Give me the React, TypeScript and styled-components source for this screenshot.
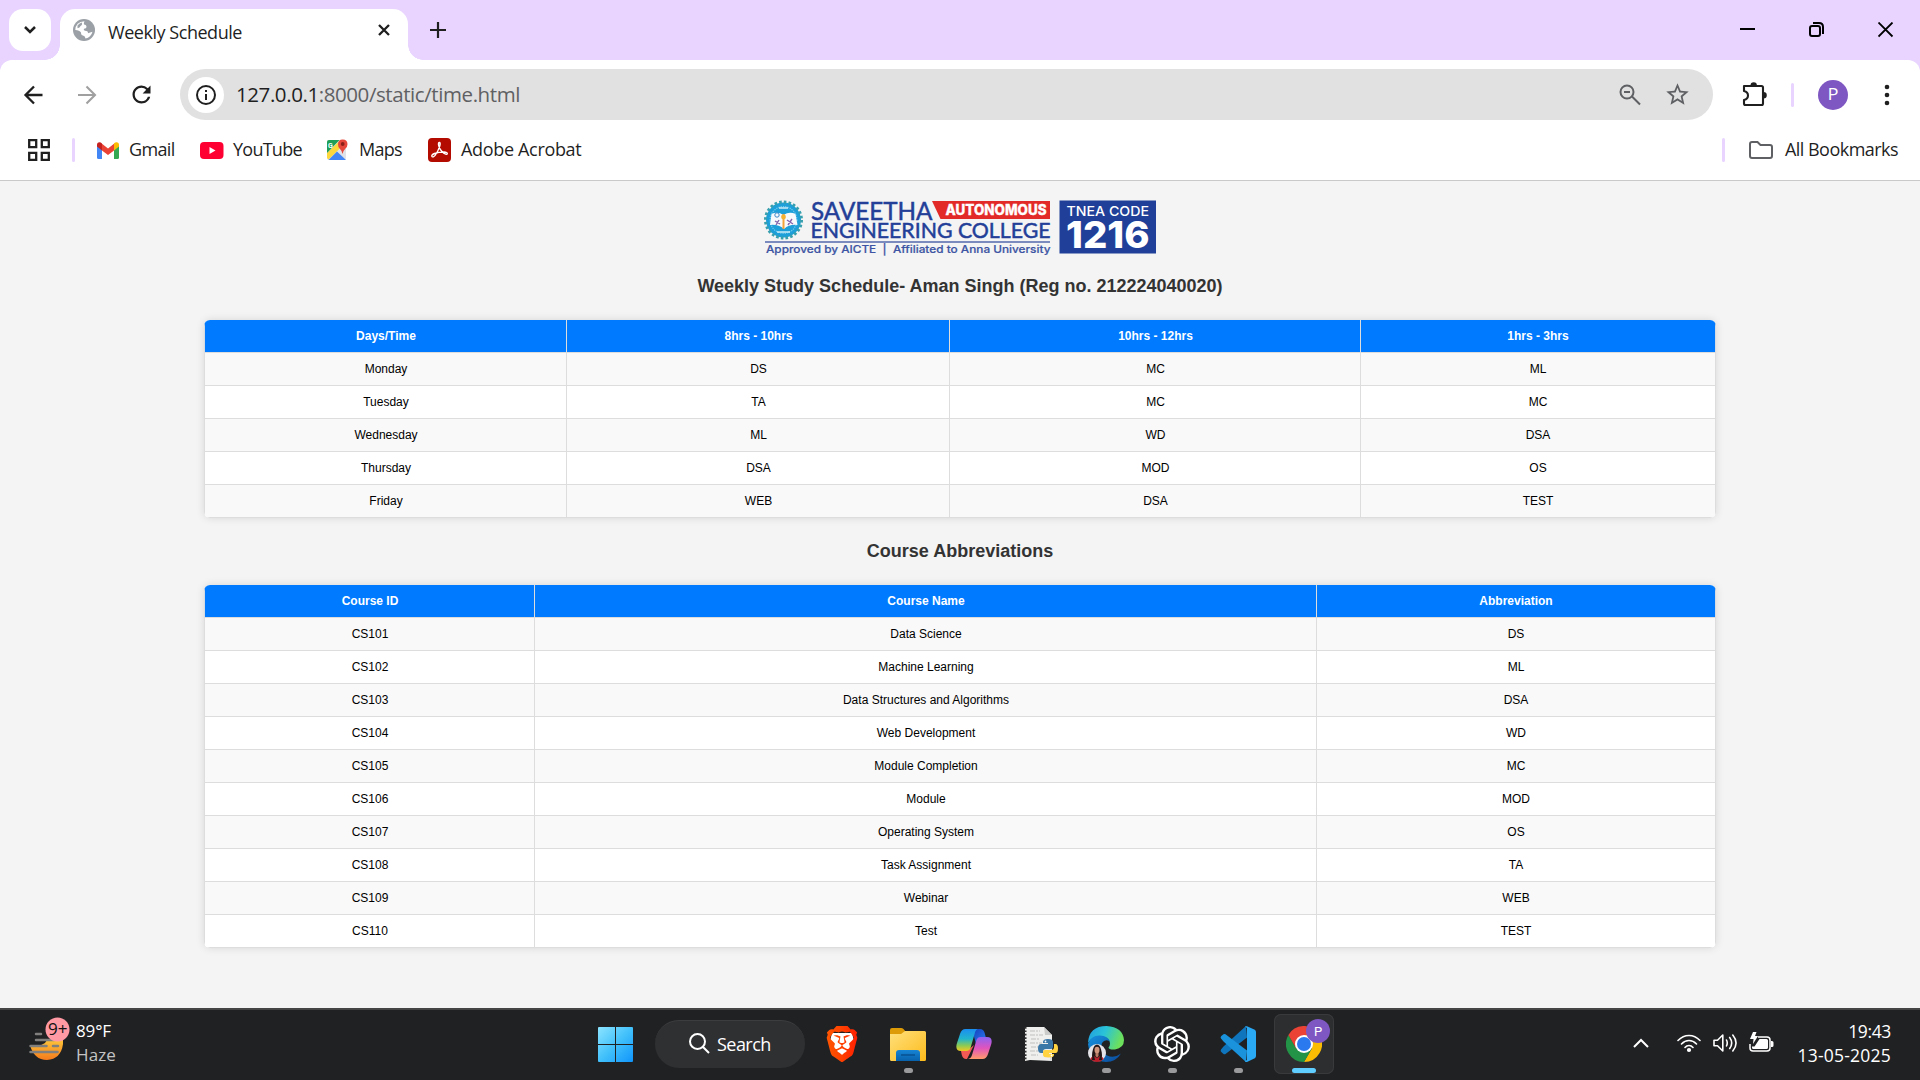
import React from "react";
import styled, { createGlobalStyle } from "styled-components";
import { SiOpenai, SiBrave } from "react-icons/si";
import { MdStarBorder, MdRefresh } from "react-icons/md";

const ui = `"Open Sans", "Noto Sans", sans-serif`;
const arial = `"Liberation Sans", Arial, sans-serif`;

const Global = createGlobalStyle`
  * { box-sizing: border-box; }
  body { margin: 0; background: #f4f4f4; }
  svg { display: block; flex: none; }
`;

const Screen = styled.div`
  width: 1920px;
  height: 1080px;
  display: flex;
  flex-direction: column;
  overflow: hidden;
`;

/* ---------- browser frame ---------- */
const TabStrip = styled.div`
  height: 60px;
  background: #e8d4ff;
  display: flex;
  align-items: flex-end;
`;
const TabSearch = styled.div`
  width: 42px;
  height: 42px;
  margin: 0 0 9px 9px;
  border-radius: 14px;
  background: #fff;
  display: grid;
  place-items: center;
`;
const Flare = styled.div<{ $side: "left" | "right" }>`
  width: 15px;
  height: 15px;
  margin-left: ${(p) => (p.$side === "left" ? "-6px" : "0")};
  background: radial-gradient(
    circle at ${(p) => (p.$side === "left" ? "0 0" : "100% 0")},
    transparent 14.5px,
    #fff 15px
  );
`;
const Tab = styled.div`
  width: 348px;
  height: 51px;
  background: #fff;
  border-radius: 15px 15px 0 0;
  display: flex;
  align-items: center;
  padding: 0 16px 9px 13px;
`;
const TabTitle = styled.span`
  flex: 1;
  margin: 3px 0 0 13px;
  font: 18px/24px ${ui};
  letter-spacing: -0.46px;
  color: #1f1f1f;
`;
const NewTab = styled.div`
  margin: 0 0 22px 7px;
`;
const WindowButtons = styled.div`
  margin: 0 26px 22px auto;
  display: flex;
  gap: 53px;
`;
const ToolbarBack = styled.div`
  background: #e8d4ff;
`;
const Toolbar = styled.div`
  height: 69px;
  background: #fff;
  border-radius: 12px 12px 0 0;
  display: flex;
  align-items: center;
  padding: 0 30px 0 22px;
`;
const NavIcons = styled.div`
  display: flex;
  align-items: center;
  gap: 29px;
  width: 158px;
`;
const Omnibox = styled.div`
  width: 1533px;
  height: 51px;
  border-radius: 26px;
  background: #e1e1e1;
  display: flex;
  align-items: center;
  padding: 0 22px 0 8px;
`;
const InfoBadge = styled.div`
  width: 36px;
  height: 36px;
  border-radius: 50%;
  background: #fff;
  display: grid;
  place-items: center;
`;
const Url = styled.span`
  flex: 1;
  margin: -2px 0 0 12px;
  font: 20.5px/28px ${ui};
  letter-spacing: -0.42px;
  color: #5f6063;
  b {
    font-weight: 400;
    color: #1f1f1f;
  }
`;
const OmniIcons = styled.div`
  display: flex;
  align-items: center;
  gap: 23px;
`;
const Right = styled.div`
  flex: 1;
  display: flex;
  align-items: center;
  padding-left: 28px;
`;
const Bar = styled.span`
  width: 3px;
  height: 24px;
  border-radius: 1.5px;
  background: #e8d4ff;
`;
const ToolbarBar = styled(Bar)`
  margin: 0 24px;
`;
const MenuDots = styled.div`
  margin-left: auto;
`;
const Avatar = styled.div<{ $size: number }>`
  width: ${(p) => p.$size}px;
  height: ${(p) => p.$size}px;
  border-radius: 50%;
  background: #7e57c2;
  color: #fff;
  display: grid;
  place-items: center;
  font: ${(p) => p.$size / 2 + 1}px/1 Roboto, sans-serif;
`;
const Bookmarks = styled.div`
  height: 52px;
  background: #fff;
  border-bottom: 1px solid #c9c9c9;
  display: flex;
  align-items: center;
  padding: 0 22px 9px 28px;
`;
const Bookmark = styled.div<{ $width: number; $gap: number; $spacing: number }>`
  width: ${(p) => p.$width}px;
  display: flex;
  align-items: center;
  gap: ${(p) => p.$gap}px;
  white-space: nowrap;
  font: 18px/24px ${ui};
  letter-spacing: ${(p) => p.$spacing}px;
  color: #1f1f1f;
`;
const BookmarkLabel = styled.span`
  margin-top: -2px;
`;
const BarSlot = styled.div<{ $before: number; $after: number }>`
  display: flex;
  margin-left: ${(p) => (p.$before < 0 ? "auto" : p.$before + "px")};
  margin-right: ${(p) => p.$after}px;
`;

/* ---------- schedule page ---------- */
const Page = styled.main`
  flex: 1;
  background: #f4f4f4;
  display: flex;
  flex-direction: column;
  align-items: center;
  padding-top: 12px;
  font-family: ${arial};
`;
const Heading = styled.h2<{ $top: number; $bottom: number }>`
  margin: ${(p) => p.$top}px 0 ${(p) => p.$bottom}px;
  font: bold 18px/21px ${arial};
  color: #333;
`;
const Grid = styled.div`
  width: 1512px;
  border-radius: 6px;
  overflow: hidden;
  background: #fff;
  box-shadow: 0 0 8px rgba(0, 0, 0, 0.12);
`;
const Row = styled.div<{ $columns: string; $head?: boolean }>`
  display: grid;
  grid-template-columns: ${(p) => p.$columns};
  height: 33px;
  border: solid #ddd;
  border-width: 0 1px 1px;
  border-color: ${(p) => (p.$head ? "#007bff #d5dce4 #ddd" : "#ddd")};
  background: ${(p) => (p.$head ? "#007bff" : "#fff")};
  color: ${(p) => (p.$head ? "#fff" : "#000")};
  font-weight: ${(p) => (p.$head ? 700 : 400)};
  &:nth-child(even) {
    background: #f9f9f9;
  }
`;
const Cell = styled.div`
  border-right: 1px solid #ddd;
  padding-left: 1px;
  text-align: center;
  font-size: 12px;
  line-height: 32px;
  &:last-child {
    border-right: 0;
    padding-left: 0;
  }
`;

/* ---------- taskbar ---------- */
const Taskbar = styled.footer`
  height: 72px;
  background: #202123;
  border-top: 2px solid #454546;
  display: flex;
  color: #fff;
  font-family: ${ui};
`;
const Weather = styled.div`
  width: 598px;
  display: flex;
  padding: 5px 0 0 27px;
`;
const WeatherText = styled.div`
  margin: 4px 0 0 6px;
  font: 17px/24px ${ui};
  letter-spacing: -0.15px;
  span {
    display: block;
    color: #c4c4c4;
    letter-spacing: 0.1px;
  }
`;
const StartSlot = styled.div`
  padding-top: 17px;
`;
const Search = styled.div`
  width: 150px;
  height: 48px;
  margin: 10px 4px 0 22px;
  border-radius: 24px;
  background: #2f3032;
  border-top: 1px solid #3c3d3f;
  display: flex;
  align-items: center;
  padding: 0 0 2px 34px;
  gap: 7px;
  font: 18px/24px ${ui};
  letter-spacing: -0.55px;
`;
const TaskApp = styled.div<{ $active?: boolean }>`
  width: 60px;
  height: 60px;
  margin: 4px 3px 0;
  border-radius: 7px;
  background: ${(p) => (p.$active ? "#2d2e30" : "transparent")};
  box-shadow: ${(p) => (p.$active ? "inset 0 0 0 1px #393a3c" : "none")};
  display: flex;
  flex-direction: column;
  align-items: center;
  padding-top: 12px;
  position: relative;
`;
const Mark = styled.div<{ $active?: boolean }>`
  width: ${(p) => (p.$active ? 24 : 9)}px;
  height: 5px;
  margin-top: 6px;
  border-radius: 3px;
  background: ${(p) => (p.$active ? "#60cdff" : "#9a9a9c")};
`;
const ProfileBadge = styled.div`
  position: absolute;
  top: 5px;
  left: 32px;
`;
const Tray = styled.div`
  margin-left: auto;
  display: flex;
  align-items: flex-start;
  padding: 20px 29px 0 0;
`;
const TraySlot = styled.div<{ $after: number; $top?: number }>`
  margin: ${(p) => p.$top ?? 3}px ${(p) => p.$after}px 0 0;
`;
const Clock = styled.div`
  width: 97px;
  margin-top: -11px;
  text-align: right;
  white-space: nowrap;
  font: 17.5px/24px ${ui};
  letter-spacing: 0.22px;
`;
const Time = styled.div`
  letter-spacing: -0.35px;
`;

/* ---------- drawings ---------- */
const Stroke = ({ d, w, h, c = "#1f1f1f", s = 2.2 }: { d: string; w: number; h: number; c?: string; s?: number }) => (
  <svg width={w} height={h} viewBox={`0 0 ${w} ${h}`} fill="none" stroke={c} strokeWidth={s}>
    <path d={d} />
  </svg>
);

const Logo = () => (
  <svg width="392" height="66" viewBox="764 193 392 66">
    <circle cx="783.5" cy="220" r="17.5" fill="#1d9fd9" />
    <circle cx="783.5" cy="220" r="18" fill="none" stroke="#379fae" strokeWidth="3" strokeDasharray="2.6 2.1" />
    <circle cx="783.5" cy="220" r="13.4" fill="none" stroke="#73c9ec" strokeWidth="1.2" strokeDasharray="1.3 1" />
    <path d="M771.5 214q6-3 12 1 6-4 12-1l2 11q-8-1-13.500 4-6-5-14-4z" fill="#f7fafc" />
    <path d="M783.500 214v15" stroke="#f2a33a" strokeWidth="2" />
    <circle cx="783.500" cy="217" r="2.400" fill="#f4b233" />
    <circle cx="777" cy="215" r="2.200" fill="none" stroke="#3a86c8" />
    <path d="M775 221l5 3m-4 1l3-5M787 220l6 4m-5 1l4-6" stroke="#8565ad" strokeWidth="1.400" />
    <path d="M779 208h9M777 232h13" stroke="#c9ecf8" strokeWidth="1.300" />
    <g fill="#233f98" fontFamily="Lato, sans-serif" stroke="#233f98" strokeWidth=".5">
      <text x="811" y="219.700" fontSize="25.500" textLength="121.500" lengthAdjust="spacingAndGlyphs">SAVEETHA</text>
      <text x="810.500" y="237.800" fontSize="21.500" textLength="240" lengthAdjust="spacingAndGlyphs">ENGINEERING COLLEGE</text>
    </g>
    <path d="M932 201h118v18h-109.500z" fill="#e22b29" />
    <text x="945.500" y="214.800" fontFamily="Inter, sans-serif" fontWeight="800" fontSize="14" fill="#fff" stroke="#fff" strokeWidth=".3" textLength="101" lengthAdjust="spacingAndGlyphs">AUTONOMOUS</text>
    <path d="M765 242h285" stroke="#5468ac" strokeWidth="1.500" />
    <text x="766" y="252.500" fontFamily="Inter, sans-serif" fontWeight="500" fontSize="10.500" fill="#3c54a3" stroke="#3c54a3" strokeWidth=".2" textLength="284.500" lengthAdjust="spacingAndGlyphs" xmlSpace="preserve">Approved by AICTE  |  Affiliated to Anna University</text>
    <path d="M1059.500 200.500h97v53h-97z" fill="#1f3f98" />
    <text x="1066.500" y="215.600" fontFamily="Inter, sans-serif" fontWeight="500" fontSize="13.500" fill="#fff" textLength="82.500" lengthAdjust="spacingAndGlyphs">TNEA CODE</text>
    <text x="1066" y="247.500" fontFamily="Inter, sans-serif" fontWeight="800" fontSize="37.500" fill="#fff" textLength="83.500" lengthAdjust="spacingAndGlyphs">1216</text>
  </svg>
);

const Globe = () => (
  <svg width="22" height="22" viewBox="0 0 22 22">
    <circle cx="11" cy="11" r="11" fill="#9aa0a6" />
    <path d="M11.500 2.200Q10.500 4 11 5.500q2.500 0 2.500 2.500 0 1.500-2.500 1.700-1 1.300 1 2.100 3 0 3 2.400 2-1 4.500-1.500-1.500 5.500-7 6.800-.3-2.500-2.500-3-2 0-2-3-1.500-2.500-5.700-2.500Q2.500 3 11.500 2.200z" fill="#fff" />
    <path d="M4.500 6.500q2-2.500 4.500-3 .5 2.500-1.500 3.500-.5 2-3 2.200z" fill="#9aa0a6" />
  </svg>
);

const Gmail = () => (
  <svg width="22" height="17" viewBox="0 0 22 17">
    <path d="M0 3v12.500Q0 17 1.500 17H5V7z" fill="#4285f4" />
    <path d="M22 3v12.500q0 1.500-1.500 1.500H17V7z" fill="#34a853" />
    <path d="M17 2v6.500l5-4V2.500Q22 .5 20 .3 18.500 0 17 1.200z" fill="#fbbc04" />
    <path d="M5 8.500V1.800l6 4.600 6-4.600v6.700l-6 4.500z" fill="#ea4335" />
    <path d="M0 2.500v2l5 4V1.500Q3.500 0 2 .3 0 .5 0 2.500z" fill="#c5221f" />
  </svg>
);
const YouTube = () => (
  <svg width="24" height="17" viewBox="0 0 24 17">
    <rect width="23.500" height="17" rx="4" fill="#ff0033" />
    <path d="M9.500 5v7l6-3.500z" fill="#fff" />
  </svg>
);
const Maps = () => (
  <svg width="22" height="22" viewBox="0 0 22 22">
    <path d="M1 3q0-2 2-2h13l4 9v9q0 2-2 2H3q-2 0-2-2z" fill="#dfe3e8" />
    <path d="M1 14L14 1.500l3 5L2.500 20.500 1 19z" fill="#fdd83c" />
    <path d="M1 3q0-2 2-2h10.500L1 14z" fill="#1e9e57" />
    <path d="M2.500 21L11 12.500l9 8.500z" fill="#4285f4" />
    <text x="2" y="8.500" fontFamily="Roboto, sans-serif" fontSize="7" fontWeight="700" fill="#fff">G</text>
    <path d="M16.500 15q-.4-3-2.900-5.400Q12 8 12 5.200 12 .7 16.700.5 21.500.7 21.500 5.200q0 2.300-2 4.400Q17 12 16.500 15z" fill="#e5483a" />
    <circle cx="16.700" cy="5" r="1.900" fill="#8b2019" />
  </svg>
);
const Acrobat = () => (
  <svg width="24" height="24" viewBox="0 0 24 24">
    <rect width="23" height="24" rx="4" fill="#b30b00" />
    <path d="M4 18.500q-1-1.500 2.500-3 4-1.500 9.500-1.500 3.500.3 3.300 1.700-.5 1.500-3.500-.5-4.500-3.500-5.300-8.500-.1-2.500 1-2.300 1.200.5.200 4-1.500 4.600-4.600 9-2 2.300-3.100 1.100z" fill="none" stroke="#fff" strokeWidth="1.400" />
  </svg>
);
const Puzzle = () => (
  <svg width="26" height="26" viewBox="0 0 26 26">
    <path d="M3 4h17.500Q22 4 22 5.500v16q0 1.500-1.500 1.500h-16Q3 23 3 21.500V18q4-1 4-4.500T3 9z" fill="none" stroke="#1f1f1f" strokeWidth="2.100" strokeLinejoin="round" />
    <path d="M9.500 3.500a3.200 3.200 0 0 1 6.400 0zM22.500 10a3.300 3.300 0 0 1 0 6.600z" fill="#1f1f1f" />
  </svg>
);
const Haze = () => (
  <svg width="43" height="52" viewBox="0 0 43 52">
    <defs>
      <linearGradient id="sun" x2="0" y2="1">
        <stop stopColor="#ffc83a" />
        <stop offset="1" stopColor="#f37a1c" />
      </linearGradient>
    </defs>
    <path d="M3 30q8 3 15-2 2-4 7-4h11v5q-2 15-16 16Q7 45 3 30z" fill="url(#sun)" />
    <path d="M9 19h5M9 25h18M3.500 31h16M26 31h5M3.500 37h27" stroke="#807f7d" strokeWidth="2.500" strokeLinecap="round" />
    <circle cx="30.500" cy="14.500" r="12" fill="#ff99a4" />
    <text x="21" y="19.500" fontFamily="Open Sans, sans-serif" fontSize="16" textLength="19.500" lengthAdjust="spacingAndGlyphs" fill="#111">9+</text>
  </svg>
);
const Windows = () => (
  <svg width="35" height="35" viewBox="0 0 35 35">
    <defs>
      <linearGradient id="win" x2="1" y2="1">
        <stop stopColor="#8ce4ff" />
        <stop offset=".5" stopColor="#43c1fb" />
        <stop offset="1" stopColor="#0f95fb" />
      </linearGradient>
    </defs>
    <path d="M1 0h16v17H0V1q0-1 1-1zm17 0h16q1 0 1 1v16H18zM0 18h17v17H1q-1 0-1-1zm18 0h17v16q0 1-1 1H18z" fill="url(#win)" />
  </svg>
);
const Brave = () => (
  <svg width="36" height="36" viewBox="0 0 36 36">
    <defs>
      <linearGradient id="brave">
        <stop stopColor="#ff5601" />
        <stop offset=".5" stopColor="#ff4000" />
        <stop offset="1" stopColor="#ff1f01" />
      </linearGradient>
    </defs>
    <path d="M8 7h20l2 8-4 14-8 5-8-5-4-14z" fill="#fff" />
    <SiBrave size={36} style={{ fill: "url(#brave)" }} />
  </svg>
);
const Explorer = () => (
  <svg width="36" height="36" viewBox="0 0 36 36">
    <defs>
      <linearGradient id="folder" x2="1" y2="1">
        <stop stopColor="#ffe07c" />
        <stop offset="1" stopColor="#fdbb1b" />
      </linearGradient>
      <linearGradient id="tray" x2="0" y2="1">
        <stop stopColor="#1684d5" />
        <stop offset="1" stopColor="#0961ab" />
      </linearGradient>
    </defs>
    <path d="M0 4q0-2 2-2h9q1.500 0 2.500 1l2 2.500V10H0z" fill="#dd9b08" />
    <path d="M0 8h11l4-3h19.500Q36 5 36 6.500v27q0 1.500-1.500 1.500h-33Q0 35 0 33.500z" fill="url(#folder)" />
    <path d="M6 35v-8q0-3 3-3h18q3 0 3 3v8z" fill="url(#tray)" />
    <path d="M11 29h14" stroke="#07508f" strokeWidth="1.400" />
  </svg>
);
const Copilot = () => (
  <svg width="36" height="36" viewBox="0 0 36 36">
    <defs>
      <linearGradient id="cpa" x2="0" y2="1">
        <stop stopColor="#1b8df0" />
        <stop offset=".45" stopColor="#22b5cd" />
        <stop offset=".75" stopColor="#8bcb55" />
        <stop offset="1" stopColor="#f2c81f" />
      </linearGradient>
      <linearGradient id="cpb" x2="0" y2="1">
        <stop stopColor="#8d63f4" />
        <stop offset=".5" stopColor="#e054bd" />
        <stop offset="1" stopColor="#ff9b6b" />
      </linearGradient>
      <linearGradient id="cpc" x2="1" y2="1">
        <stop stopColor="#123fb8" />
        <stop offset="1" stopColor="#2f7df5" />
      </linearGradient>
    </defs>
    <path d="M16 3h8q3.500 0 4.500 3.500L30 12h-5q-3 0-4 3l-1 3z" fill="url(#cpc)" />
    <path d="M11 33h-1q-3 0-4.200-4L5 25l7-1 6-5z" fill="#f15a55" />
    <path d="M9.500 3H22q-2 0-3 3.500L14.500 22q-1 3-4 3H5q-6 0-4.300-7L4 8q1.500-5 5.500-5z" fill="url(#cpa)" />
    <path d="M26.500 33H12q3-.5 4-4l4.500-15q1-3 4-3H31q6 0 4.300 7L32 28q-1.500 5-5.500 5z" fill="url(#cpb)" />
  </svg>
);
const PythonDoc = () => (
  <svg width="36" height="36" viewBox="0 0 36 36">
    <path d="M3 1h19l8 8v26L8 34l-5 1z" fill="#efefed" />
    <path d="M22 1l1 8h7z" fill="#cbcbca" />
    <path d="M3.500 1v34" stroke="#303030" strokeWidth="2" strokeDasharray="1.700 1.700" />
    <path d="M8 5h10M8 9h13M9 13h9M8 17h12M9 21h8M8 25h9M9 29h7" stroke="#bfbfbf" strokeWidth="1" strokeDasharray="5 1 2 1" />
    <path d="M29 28v7" stroke="#ddd" strokeWidth="2" />
    <path d="M21 16q0-3 5-3t5 3v5q0 2-2 2h-5q-3 0-3 3v1h-2q-3 0-3-4.500t3-4.500h7v-1h-5z" fill="#3b78a8" />
    <path d="M32 18h1.500q2.500 0 2.500 4.500t-2.500 4.500H27v1h5v1q0 2.500-5.500 2.500T21 29v-3q0-2 2-2h6q3 0 3-3z" fill="#ffd342" />
    <circle cx="23.500" cy="15.500" r=".9" fill="#fff" />
    <circle cx="29.500" cy="29.500" r=".9" fill="#fff" />
  </svg>
);
const Edge = () => (
  <svg width="36" height="36" viewBox="0 0 36 36">
    <defs>
      <linearGradient id="eda" x2="1" y2=".3">
        <stop stopColor="#219be0" />
        <stop offset=".5" stopColor="#2ac3d8" />
        <stop offset="1" stopColor="#6ce05d" />
      </linearGradient>
      <linearGradient id="edb" x2=".8" y2="1">
        <stop stopColor="#1691de" />
        <stop offset="1" stopColor="#0c50a0" />
      </linearGradient>
      <clipPath id="face">
        <circle cx="9" cy="27" r="9" />
      </clipPath>
    </defs>
    <path d="M0 17Q1 0 18.500 0 35 1 36 14q0 8-9 9.500-6 .5-6.500-2 1.500-1.500 1.500-4 0-5-7-7Q5 9 0 17z" fill="url(#eda)" />
    <path d="M0 18Q3 9 12 9.500q8 .5 10 6-5-3-8 1.500-3 8 5 12.500 7 3.500 14-2-5 8.500-15 8.500Q2 35 0 18z" fill="url(#edb)" />
    <g clipPath="url(#face)">
      <path d="M0 18h18v18H0z" fill="#e4e3e8" />
      <path d="M4 36Q3.500 19 9 18.500 14.500 19 14 36z" fill="#211719" />
      <path d="M1 36q1-5 5-6l3 2 3-2q4 1 5 6z" fill="#b81d2a" />
      <path d="M7.500 26h3v4L9 31.500 7.500 30z" fill="#b87a64" />
      <ellipse cx="9" cy="24" rx="2.500" ry="3.300" fill="#cf957d" />
      <path d="M5 25l-1 9h3zM13 25l1 9h-3z" fill="#211719" />
    </g>
  </svg>
);
const VsCode = () => (
  <svg width="36" height="36" viewBox="0 0 36 36">
    <path d="M26 0L3.500 20.500 1 23.500q-1 1.500.3 2.500L3.500 28q1 .6 2 0L27 11.500z" fill="#0f76bd" />
    <path d="M26 36L3.500 15.500 1 12.500Q0 11 1.300 10L3.500 8.300q1-.6 2 0L27 24.500z" fill="#1a93dc" />
    <path d="M25 .5Q26 0 27 .3l7.800 3.500Q36 4.500 36 6v24q0 1.500-1.200 2.200L27.500 35.700q-1.500.6-2.700-.4L27 34V2z" fill="#2aa9f4" />
  </svg>
);
const Chrome = () => (
  <svg width="36" height="36" viewBox="0 0 36 36">
    <path d="M18 18L2.400 9A18 18 0 0 1 33.600 9z" fill="#ea4335" />
    <path d="M18 9h15.600A18 18 0 0 1 18 36l7.800-13.500z" fill="#fbbc04" />
    <path d="M2.400 9l7.800 13.500L18 27l7.800-4.500L18 36A18 18 0 0 1 2.400 9z" fill="#239447" />
    <path d="M2.400 9L10.200 22.500 18 9z" fill="#ea4335" />
    <circle cx="18" cy="18" r="9" fill="#fff" />
    <circle cx="18" cy="18" r="7" fill="#2b79ee" />
  </svg>
);
const Wifi = () => (
  <svg width="24" height="20" viewBox="0 0 24 20" fill="none" stroke="#fff" strokeWidth="1.600" strokeLinecap="round">
    <path d="M1 7.500q4.800-5 11-5t11 5M4.500 11Q7.800 7.500 12 7.500t7.500 3.500M8 14.500q1.600-2 4-2t4 2" />
    <circle cx="12" cy="17" r="1.300" fill="#fff" />
  </svg>
);
const Volume = () => (
  <svg width="25" height="20" viewBox="0 0 25 20" fill="none" stroke="#fff" strokeWidth="1.600" strokeLinecap="round" strokeLinejoin="round">
    <path d="M1 7.200h3.500L9.800 2v16L4.500 12.800H1zM13.500 7q1.500 3 0 6M16.700 4.500q4 5.500 0 11M19.800 2q6.500 8 0 16" />
  </svg>
);
const Battery = () => (
  <svg width="25" height="21" viewBox="0 0 25 21">
    <path d="M9 5h9q3 0 3 3v8q0 3-3 3H4q-3 0-3-3v-4" fill="none" stroke="#fff" strokeWidth="1.500" />
    <path d="M10.500 7h7q1.500 0 1.500 1.500v7q0 1.500-1.500 1.500h-13Q3 17 3 15.500V14.500h2.500zM22 9h1q1.500 0 1.500 1.500v3Q24.500 15 23 15h-1zM4 0h3.500L6 4h3l-5 8 .5-5H1z" fill="#fff" />
  </svg>
);

/* ---------- data ---------- */
const schedule = [
  ["Days/Time", "8hrs - 10hrs", "10hrs - 12hrs", "1hrs - 3hrs"],
  ["Monday", "DS", "MC", "ML"],
  ["Tuesday", "TA", "MC", "MC"],
  ["Wednesday", "ML", "WD", "DSA"],
  ["Thursday", "DSA", "MOD", "OS"],
  ["Friday", "WEB", "DSA", "TEST"],
];
const courses = [
  ["Course ID", "Course Name", "Abbreviation"],
  ["CS101", "Data Science", "DS"],
  ["CS102", "Machine Learning", "ML"],
  ["CS103", "Data Structures and Algorithms", "DSA"],
  ["CS104", "Web Development", "WD"],
  ["CS105", "Module Completion", "MC"],
  ["CS106", "Module", "MOD"],
  ["CS107", "Operating System", "OS"],
  ["CS108", "Task Assignment", "TA"],
  ["CS109", "Webinar", "WEB"],
  ["CS110", "Test", "TEST"],
];
const DataTable = ({ rows, columns }: { rows: string[][]; columns: string }) => (
  <Grid>
    {rows.map((r, i) => (
      <Row key={r[0]} $columns={columns} $head={i === 0}>
        {r.map((c, j) => (
          <Cell key={j}>{c}</Cell>
        ))}
      </Row>
    ))}
  </Grid>
);

const taskApps = [
  { icon: <Brave />, open: false },
  { icon: <Explorer />, open: true },
  { icon: <Copilot />, open: false },
  { icon: <PythonDoc />, open: false },
  { icon: <Edge />, open: true },
  { icon: <SiOpenai size={36} color="#fff" />, open: true },
  { icon: <VsCode />, open: true },
];

export default function App() {
  return (
    <Screen>
      <Global />
      <TabStrip>
        <TabSearch>
          <Stroke w={14} h={10} d="M2 2l5 5 5-5" s={2.5} />
        </TabSearch>
        <Flare $side="left" />
        <Tab>
          <Globe />
          <TabTitle>Weekly Schedule</TabTitle>
          <Stroke w={16} h={16} d="M3 3l10 10M13 3L3 13" s={2.3} />
        </Tab>
        <Flare $side="right" />
        <NewTab>
          <Stroke w={16} h={16} d="M8 0v16M0 8h16" s={2.2} />
        </NewTab>
        <WindowButtons>
          <Stroke w={16} h={16} d="M0 7h15" s={2} c="#000" />
          <Stroke w={16} h={16} d="M3 4h6q2 0 2 2v6q0 2-2 2H3q-2 0-2-2V6q0-2 2-2zM4 1h6q4 0 4 4v7" s={2} c="#000" />
          <Stroke w={16} h={16} d="M.5.500l14 14M14.500.500l-14 14" s={1.8} c="#000" />
        </WindowButtons>
      </TabStrip>
      <ToolbarBack>
        <Toolbar>
          <NavIcons>
            <Stroke w={24} h={24} d="M20.500 12H4M12 3.500L3.500 12l8.500 8.500" s={2.3} />
            <Stroke w={24} h={24} d="M3 12h16.500M11.500 3.500L20 12l-8.500 8.500" s={2.1} c="#a0a0a0" />
            <MdRefresh size={27} color="#1f1f1f" />
          </NavIcons>
          <Omnibox>
            <InfoBadge>
              <svg width="22" height="22" viewBox="0 0 22 22">
                <circle cx="11" cy="11" r="9" fill="none" stroke="#1f1f1f" strokeWidth="2" />
                <path d="M10 10h2v6h-2zM10 6h2v2h-2z" fill="#1f1f1f" />
              </svg>
            </InfoBadge>
            <Url>
              <b>127.0.0.1</b>:8000/static/time.html
            </Url>
            <OmniIcons>
              <Stroke w={22} h={22} d="M14.500 8a6.500 6.500 0 1 1-13 0 6.500 6.500 0 0 1 13 0zM13 12.500l8 8M5 8h6" s={2} c="#5f6063" />
              <MdStarBorder size={27} color="#5f6063" />
            </OmniIcons>
          </Omnibox>
          <Right>
            <Puzzle />
            <ToolbarBar />
            <Avatar $size={30}>P</Avatar>
            <MenuDots>
              <svg width="6" height="22" viewBox="0 0 6 22" fill="#1f1f1f">
                <circle cx="3" cy="3" r="2.300" />
                <circle cx="3" cy="11" r="2.300" />
                <circle cx="3" cy="19" r="2.300" />
              </svg>
            </MenuDots>
          </Right>
        </Toolbar>
      </ToolbarBack>
      <Bookmarks>
        <Stroke w={22} h={22} d="M1.200 1.200h7v7h-7zM13.800 1.200h7v7h-7zM1.200 13.800h7v7h-7zM13.800 13.800h7v7h-7z" s={2.3} />
        <BarSlot $before={22} $after={22}>
          <Bar />
        </BarSlot>
        <Bookmark $width={103} $gap={10} $spacing={-0.65}>
          <Gmail />
          <BookmarkLabel>Gmail</BookmarkLabel>
        </Bookmark>
        <Bookmark $width={126} $gap={9} $spacing={-0.75}>
          <YouTube />
          <BookmarkLabel>YouTube</BookmarkLabel>
        </Bookmark>
        <Bookmark $width={102} $gap={11} $spacing={-0.7}>
          <Maps />
          <BookmarkLabel>Maps</BookmarkLabel>
        </Bookmark>
        <Bookmark $width={160} $gap={9} $spacing={-0.33}>
          <Acrobat />
          <BookmarkLabel>Adobe Acrobat</BookmarkLabel>
        </Bookmark>
        <BarSlot $before={-1} $after={24}>
          <Bar />
        </BarSlot>
        <Bookmark $width={149} $gap={12} $spacing={-0.53}>
          <Stroke w={24} h={20} d="M3 2h5.500l3 3H21q2 0 2 2v9q0 2-2 2H3q-2 0-2-2V4q0-2 2-2z" s={2} c="#5f6063" />
          <BookmarkLabel>All Bookmarks</BookmarkLabel>
        </Bookmark>
      </Bookmarks>
      <Page>
        <Logo />
        <Heading $top={17} $bottom={23}>
          Weekly Study Schedule- Aman Singh (Reg no. 212224040020)
        </Heading>
        <DataTable rows={schedule} columns="362px 383px 411px 354px" />
        <Heading $top={23} $bottom={23}>
          Course Abbreviations
        </Heading>
        <DataTable rows={courses} columns="330px 782px 398px" />
      </Page>
      <Taskbar>
        <Weather>
          <Haze />
          <WeatherText>
            89°F<span>Haze</span>
          </WeatherText>
        </Weather>
        <StartSlot>
          <Windows />
        </StartSlot>
        <Search>
          <Stroke w={21} h={21} d="M16 8.500a7.500 7.500 0 1 1-15 0 7.500 7.500 0 0 1 15 0zM14 14l6 6" s={2} c="#fff" />
          Search
        </Search>
        {taskApps.map((a, i) => (
          <TaskApp key={i}>
            {a.icon}
            {a.open && <Mark />}
          </TaskApp>
        ))}
        <TaskApp $active>
          <Chrome />
          <ProfileBadge>
            <Avatar $size={24}>P</Avatar>
          </ProfileBadge>
          <Mark $active />
        </TaskApp>
        <Tray>
          <TraySlot $after={28} $top={5}>
            <Stroke w={16} h={16} d="M1 12l7-7 7 7" s={2} c="#fff" />
          </TraySlot>
          <TraySlot $after={12}>
            <Wifi />
          </TraySlot>
          <TraySlot $after={11}>
            <Volume />
          </TraySlot>
          <TraySlot $after={20} $top={2}>
            <Battery />
          </TraySlot>
          <Clock>
            <Time>19:43</Time>
            13-05-2025
          </Clock>
        </Tray>
      </Taskbar>
    </Screen>
  );
}
